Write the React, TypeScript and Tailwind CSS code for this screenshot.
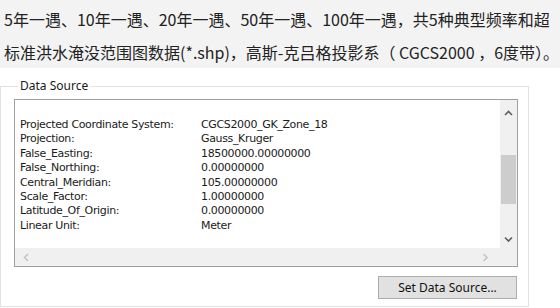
import React from 'react';

const rows: [string, string][] = [
  ['Projected Coordinate System:', 'CGCS2000_GK_Zone_18'],
  ['Projection:', 'Gauss_Kruger'],
  ['False_Easting:', '18500000.00000000'],
  ['False_Northing:', '0.00000000'],
  ['Central_Meridian:', '105.00000000'],
  ['Scale_Factor:', '1.00000000'],
  ['Latitude_Of_Origin:', '0.00000000'],
  ['Linear Unit:', 'Meter'],
];

const Chevron: React.FC<{ dir: 'up' | 'down' | 'left' | 'right'; color: string }> = ({ dir, color }) => {
  const pts = {
    up: '1,5 4.5,1.5 8,5',
    down: '1,1.5 4.5,5 8,1.5',
    left: '5,1 1.5,4.5 5,8',
    right: '1.5,1 5,4.5 1.5,8',
  }[dir];
  const vertical = dir === 'up' || dir === 'down';
  return (
    <svg width={vertical ? 9 : 7} height={vertical ? 7 : 9} viewBox={vertical ? '0 0 9 7' : '0 0 7 9'}>
      <polyline points={pts} fill="none" stroke={color} strokeWidth="1.6" />
    </svg>
  );
};

const App: React.FC = () => {
  return (
    <div className="w-[560px] h-[308px] bg-white overflow-hidden">
      {/* article text */}
      <div className="h-[68px] bg-[#f3f3f3] pl-[4px] pt-[3px] text-[16px] leading-[33px] text-[#222] font-['Microsoft_YaHei','Noto_Sans_CJK_SC',sans-serif] whitespace-pre">
        <p>5年一遇、10年一遇、20年一遇、50年一遇、100年一遇，共5种典型频率和超</p>
        <p>标准洪水淹没范围图数据(*.shp)，高斯-克吕格投影系（ CGCS2000 ，6度带）。</p>
      </div>

      {/* Data Source group */}
      <fieldset className="mt-[10px] w-[529px] h-[229px] border border-[#e2e2e2] pl-[13px] pr-[10px] font-['Noto_Sans','Liberation_Sans',sans-serif]">
        <legend className="ml-[4px] px-[2px] text-[12px] leading-[16px] text-[#1a1a1a]">Data Source</legend>

        <div className="mt-[5px] h-[168px] border border-[#a0a0a0] flex flex-col">
          <div className="flex flex-1">
            <div className="flex-1 bg-white pt-[18px] pl-[5px] text-[11px] leading-[14.4px] text-[#1a1a1a] font-['DejaVu_Sans',sans-serif] tracking-[-0.35px]">
              {rows.map(([k, v]) => (
                <div key={k} className="flex">
                  <span className="w-[181px]">{k}</span>
                  <span>{v}</span>
                </div>
              ))}
            </div>
            <div className="w-[17px] bg-[#f0f0f0] flex flex-col items-center">
              <div className="h-[24px] flex items-center justify-center pt-[2px]">
                <Chevron dir="up" color="#606060" />
              </div>
              <div className="h-[31px]" />
              <div className="w-[15px] h-[49px] bg-[#cdcdcd]" />
              <div className="flex-1 flex items-end justify-center pb-[5px]">
                <Chevron dir="down" color="#606060" />
              </div>
            </div>
          </div>
          <div className="h-[18px] bg-[#f0f0f0] flex items-center justify-between pl-[8px] pr-[28px]">
            <Chevron dir="left" color="#c4c4c4" />
            <Chevron dir="right" color="#c4c4c4" />
          </div>
        </div>

        <div className="flex justify-end mt-[9px] pr-[1px]">
          <button className="w-[139px] h-[23px] bg-[#e1e1e1] border border-[#adadad] text-[12px] text-[#111] font-['Noto_Sans','Liberation_Sans',sans-serif] leading-none">
            Set Data Source...
          </button>
        </div>
      </fieldset>
    </div>
  );
};

export default App;
